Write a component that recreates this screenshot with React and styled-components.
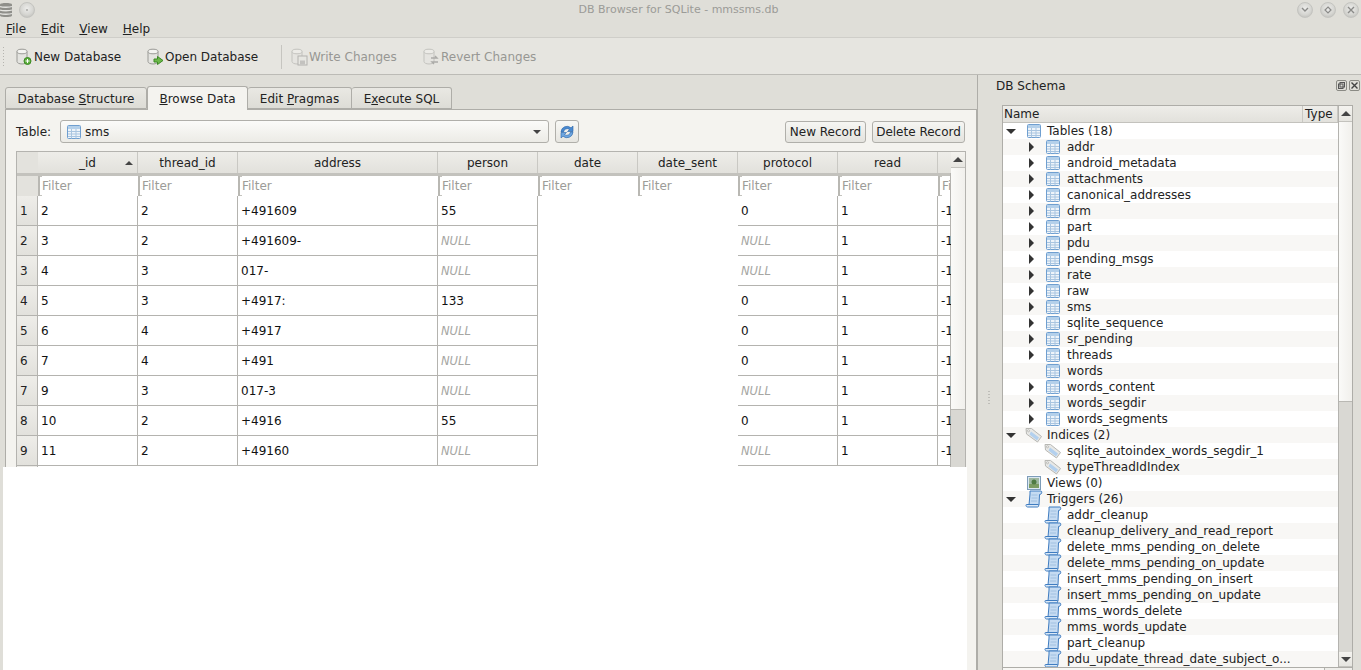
import React from "react";
import styled, { createGlobalStyle } from "styled-components";

const GlobalStyle = createGlobalStyle`
  html, body { margin: 0; padding: 0; background: #dfded8; }
  * { box-sizing: border-box; }
`;

const columns = [
  { name: "_id", width: 100, sorted: true },
  { name: "thread_id", width: 100 },
  { name: "address", width: 200 },
  { name: "person", width: 100 },
  { name: "date", width: 100, hidden: true },
  { name: "date_sent", width: 100, hidden: true },
  { name: "protocol", width: 100 },
  { name: "read", width: 100 },
  { name: "", width: 13, cut: true },
];

const rows = [
  ["2", "2", "+491609", "55", "", "", "0", "1", "-1"],
  ["3", "2", "+491609-", null, "", "", null, "1", "-1"],
  ["4", "3", "017-", null, "", "", null, "1", "-1"],
  ["5", "3", "+4917:", "133", "", "", "0", "1", "-1"],
  ["6", "4", "+4917", null, "", "", "0", "1", "-1"],
  ["7", "4", "+491", null, "", "", "0", "1", "-1"],
  ["9", "3", "017-3", null, "", "", null, "1", "-1"],
  ["10", "2", "+4916", "55", "", "", "0", "1", "-1"],
  ["11", "2", "+49160", null, "", "", null, "1", "-1"],
];

const tree = [
  { label: "Tables (18)", level: 0, icon: "table", arrow: "open" },
  ...["addr", "android_metadata", "attachments", "canonical_addresses", "drm", "part", "pdu", "pending_msgs", "rate", "raw", "sms", "sqlite_sequence", "sr_pending", "threads"].map((label) => ({ label, level: 1, icon: "table", arrow: "closed" })),
  { label: "words", level: 1, icon: "table" },
  ...["words_content", "words_segdir", "words_segments"].map((label) => ({ label, level: 1, icon: "table", arrow: "closed" })),
  { label: "Indices (2)", level: 0, icon: "tag", arrow: "open" },
  { label: "sqlite_autoindex_words_segdir_1", level: 1, icon: "tag" },
  { label: "typeThreadIdIndex", level: 1, icon: "tag" },
  { label: "Views (0)", level: 0, icon: "view" },
  { label: "Triggers (26)", level: 0, icon: "scroll", arrow: "open" },
  ...["addr_cleanup", "cleanup_delivery_and_read_report", "delete_mms_pending_on_delete", "delete_mms_pending_on_update", "insert_mms_pending_on_insert", "insert_mms_pending_on_update", "mms_words_delete", "mms_words_update", "part_cleanup", "pdu_update_thread_date_subject_o..."].map((label) => ({ label, level: 1, icon: "scroll" })),
];

const TableIcon = () => (
  <svg width="14" height="14" viewBox="0 0 14 14">
    <rect x="0.5" y="0.5" width="13" height="13" rx="1" fill="#eef4fa" stroke="#6f9fd0" />
    <rect x="1" y="1" width="12" height="3" fill="#b4d0ea" />
    <path d="M1 6.5h12M1 9h12M1 11.5h12M4.5 4v9.5M9 4v9.5" stroke="#a9c5e0" strokeWidth="1" fill="none" />
  </svg>
);

const TagIcon = () => (
  <svg width="18" height="16" viewBox="0 0 18 16">
    <path d="M1 1.5h5.5l10 8-4 5.5-11-8z" fill="#e8e8e6" stroke="#b8b8b4" />
    <path d="M6 4.5l8 6-2 3-7.5-6z" fill="#b3d0ee" />
    <circle cx="3.5" cy="3.8" r="1" fill="#fff" stroke="#9a9a96" strokeWidth="0.6" />
  </svg>
);

const ViewIcon = () => (
  <svg width="14" height="14" viewBox="0 0 14 14">
    <rect x="0.5" y="0.5" width="13" height="13" fill="#dce8f2" stroke="#7d9cb8" />
    <rect x="2" y="2" width="10" height="6" fill="#9fb8a0" />
    <rect x="2" y="8" width="10" height="4" fill="#7c9c62" />
    <circle cx="7" cy="6" r="2.5" fill="#4f7a42" />
  </svg>
);

const ScrollIcon = () => (
  <svg width="18" height="18" viewBox="0 0 18 18">
    <path d="M5 1h11c1 0 1 2.5 0 3l-1.5.5L14 15H4l1-11z" fill="#c5dbf2" stroke="#3f7cc0" />
    <path d="M1.5 14.5H13c1 0 1 2.5-.5 2.5H2.5c-1.5 0-2-2.5-1-2.5z" fill="#dbe9f7" stroke="#3f7cc0" />
    <path d="M6.5 5h6M6.5 8h6M6 11h6" stroke="#a0c0e0" fill="none" />
  </svg>
);

const DbIcon = ({ dim, children }) => (
  <svg width="18" height="18" viewBox="0 0 18 18" opacity={dim ? 0.45 : 1}>
    <path d="M2 3.5v10c0 1.4 2.2 2.5 5 2.5s5-1.1 5-2.5v-10z" fill="#e4e4e0" stroke="#9a9a96" />
    <ellipse cx="7" cy="3.5" rx="5" ry="2.3" fill="#f4f4f1" stroke="#9a9a96" />
    {children}
  </svg>
);

const treeIcons = { table: TableIcon, tag: TagIcon, view: ViewIcon, scroll: ScrollIcon };

const Screen = styled.div`
  position: relative;
  width: 1361px;
  height: 670px;
  overflow: hidden;
  display: flex;
  flex-direction: column;
  background: #dfded8;
  color: #222;
  font-family: "DejaVu Sans", sans-serif;
  font-size: 12px;
`;

const TitleBar = styled.div`
  position: relative;
  height: 19px;
  flex: none;
  display: flex;
  align-items: center;
  padding-right: 2px;
`;

const TitleText = styled.div`
  position: absolute;
  left: 0;
  right: 4px;
  text-align: center;
  color: #9b9b97;
  font-size: 11px;
`;

const TitleSpacer = styled.div`
  flex: 1;
`;

const WinButton = styled.div`
  width: 16px;
  height: 16px;
  border-radius: 50%;
  background: radial-gradient(circle at 50% 40%, #ececea 0%, #d6d6d2 55%, #b6b6b2 100%);
  border: 1px solid #c4c4c0;
  display: flex;
  align-items: center;
  justify-content: center;
  margin-left: ${(p) => p.$gap || 7}px;
`;

const MenuBar = styled.div`
  height: 19px;
  flex: none;
  display: flex;
  align-items: center;
  gap: 15px;
  padding: 1px 0 0 6px;
  font-size: 12px;
  border-bottom: 1px solid #cfcec9;
`;

const Mnemonic = styled.span`
  text-decoration: underline;
`;

const ToolBar = styled.div`
  height: 37px;
  flex: none;
  display: flex;
  align-items: center;
  background: #e6e5e0;
  border-bottom: 1px solid #bcbbb6;
  padding: 1px 0 0 2px;
`;

const Grip = styled.div`
  width: 3px;
  height: 22px;
  margin-right: 10px;
  background-image: radial-gradient(#b5b4af 0.7px, transparent 0.8px);
  background-size: 3px 3px;
`;

const ToolButton = styled.div`
  display: flex;
  align-items: center;
  gap: 1px;
  width: ${(p) => p.$width}px;
  color: ${(p) => (p.$disabled ? "#979793" : "#222")};
  font-size: 12px;
`;

const ToolSep = styled.div`
  width: 1px;
  height: 24px;
  background: #c6c5c0;
  margin-right: 8px;
`;

const Main = styled.div`
  flex: 1;
  min-height: 0;
  display: flex;
`;

const LeftArea = styled.div`
  width: 977px;
  flex: none;
  display: flex;
  flex-direction: column;
  padding: 9px 0 0 5px;
`;

const TabRow = styled.div`
  height: 25px;
  flex: none;
  display: flex;
  align-items: flex-end;
  position: relative;
  z-index: 1;
`;

const Tab = styled.div`
  width: ${(p) => p.$width}px;
  height: ${(p) => (p.$active ? 24 : 22)}px;
  margin-bottom: ${(p) => (p.$active ? -1 : 0)}px;
  padding-top: ${(p) => (p.$active ? 0 : 1)}px;
  display: flex;
  align-items: center;
  justify-content: center;
  background: ${(p) => (p.$active ? "#f4f3ef" : "linear-gradient(#e9e8e3, #dddcd6)")};
  border: 1px solid #aeada8;
  border-bottom: ${(p) => (p.$active ? "none" : "1px solid #aeada8")};
  border-left: ${(p) => (p.$first || p.$active ? "1px solid #aeada8" : "none")};
  border-radius: 3px 3px 0 0;
  font-size: 12px;
`;

const Pane = styled.div`
  flex: 1;
  min-height: 0;
  background: #f4f3ef;
  border: 1px solid #aeada8;
  border-bottom: none;
  padding: 10px 10px 0 10px;
  display: flex;
  flex-direction: column;
`;

const TableBar = styled.div`
  height: 23px;
  flex: none;
  display: flex;
  align-items: center;
  margin-bottom: 8px;
`;

const BarLabel = styled.span`
  width: 44px;
  font-size: 12px;
`;

const Combo = styled.div`
  width: 489px;
  height: 23px;
  display: flex;
  align-items: center;
  gap: 4px;
  padding: 0 7px 0 6px;
  border: 1px solid #b0afaa;
  border-radius: 3px;
  background: linear-gradient(#fbfbf9, #ecebe6);
  font-size: 12px;
`;

const ComboText = styled.span`
  flex: 1;
`;

const Caret = styled.div`
  width: 0;
  height: 0;
  border-left: ${(p) => p.$size || 4}px solid transparent;
  border-right: ${(p) => p.$size || 4}px solid transparent;
  border-top: ${(p) => p.$size || 4}px solid #444;
`;

const RefreshButton = styled.div`
  width: 24px;
  height: 23px;
  margin: 0 206px 0 6px;
  display: flex;
  align-items: center;
  justify-content: center;
  border: 1px solid #b0afaa;
  border-radius: 3px;
  background: linear-gradient(#f8f8f5, #e6e5e0);
`;

const PushButton = styled.div`
  height: 22px;
  width: ${(p) => p.$width}px;
  margin-right: ${(p) => p.$gap || 0}px;
  display: flex;
  align-items: center;
  justify-content: center;
  border: 1px solid #b0afaa;
  border-radius: 3px;
  background: linear-gradient(#f6f6f3, #e4e3de);
  font-size: 12px;
  white-space: nowrap;
`;

const GridBox = styled.div`
  width: 950px;
  height: 316px;
  flex: none;
  display: flex;
  border-top: 1px solid #b4b3af;
  border-left: 1px solid #b4b3af;
  border-right: 1px solid #b4b3af;
  background: #fff;
  overflow: hidden;
`;

const GridBody = styled.div`
  flex: 1;
  min-width: 0;
`;

const HeaderRow = styled.div`
  display: flex;
  height: 24px;
  border-bottom: 3px solid #c3c2bd;
`;

const Corner = styled.div`
  width: 21px;
  flex: none;
  background: #e3e2dd;
`;

const HeaderCell = styled.div`
  position: relative;
  width: ${(p) => p.$width}px;
  flex: none;
  display: flex;
  align-items: center;
  justify-content: center;
  background: linear-gradient(#eeede9, #e2e1dc);
  border-right: ${(p) => (p.$cut ? "none" : "1px solid #c9c8c3")};
  font-size: 12px;
`;

const SortMark = styled.div`
  position: absolute;
  right: 4px;
  top: 9px;
  border-left: 4px solid transparent;
  border-right: 4px solid transparent;
  border-bottom: 4px solid #444;
`;

const FilterRow = styled.div`
  display: flex;
  height: 20px;
  background: #fff;
`;

const FilterCell = styled.div`
  width: ${(p) => p.$width}px;
  flex: none;
  overflow: hidden;
  border-left: 2px solid #b9b8b3;
  padding-left: 2px;
  color: #9c9c98;
  font-size: 12px;
  line-height: 21px;
  white-space: nowrap;
  background:
    linear-gradient(#c4c3be, #c4c3be) 0 0 / 2px 1px no-repeat,
    linear-gradient(#c4c3be, #c4c3be) 0 100% / 2px 1px no-repeat;
`;

const DataRow = styled.div`
  display: flex;
  height: 30px;
`;

const RowHead = styled.div`
  width: 21px;
  flex: none;
  display: flex;
  align-items: center;
  padding-left: 3px;
  background: linear-gradient(#eeede9, #e2e1dc);
  border-bottom: 1px solid #b4b3af;
  border-right: 1px solid #b4b3af;
  font-size: 12px;
`;

const Cell = styled.div`
  position: relative;
  width: ${(p) => p.$width}px;
  flex: none;
  display: flex;
  align-items: center;
  padding-left: 3px;
  overflow: hidden;
  white-space: nowrap;
  border-right: ${(p) => (p.$blank || p.$cut ? "none" : "1px solid #b4b3af")};
  border-bottom: ${(p) => (p.$blank ? "none" : "1px solid #b4b3af")};
  font-size: 12px;
  color: #111;
`;

const NullText = styled.span`
  font-style: italic;
  color: #a6a6a2;
  font-size: 11.5px;
`;

const LineGap = styled.div`
  position: absolute;
  left: 27px;
  bottom: -1px;
  width: 93px;
  height: 2px;
  background: #fff;
`;

const VScroll = styled.div`
  width: ${(p) => p.$width}px;
  flex: none;
  display: flex;
  flex-direction: column;
  border-left: 1px solid #b4b3af;
  background-color: #d9d8d3;
  background-image: radial-gradient(#c9c8c3 0.6px, transparent 0.7px);
  background-size: 2px 2px;
`;

const ScrollArrow = styled.div`
  height: ${(p) => p.$height || 16}px;
  flex: none;
  display: flex;
  align-items: center;
  justify-content: center;
  background: linear-gradient(#f4f3ef, #e6e5e0);
  border-bottom: 1px solid #c3c2bd;
`;

const UpCaret = styled.div`
  border-left: 5px solid transparent;
  border-right: 5px solid transparent;
  border-bottom: 5px solid #444;
`;

const ScrollThumb = styled.div`
  height: ${(p) => p.$height}px;
  flex: none;
  background: linear-gradient(90deg, #fafaf8, #f1f0ec);
  border-bottom: 1px solid #b9b8b3;
`;

const ScrollFill = styled.div`
  flex: 1;
`;

const Splitter = styled.div`
  width: 25px;
  flex: none;
  display: flex;
  align-items: center;
  justify-content: center;
  padding: 50px 2px 0 0;
  border-left: 1px solid #aeada8;
`;

const SplitGrip = styled.div`
  width: 2px;
  height: 16px;
  background-image: radial-gradient(#bebdb8 0.7px, transparent 0.8px);
  background-size: 2px 3px;
`;

const Dock = styled.div`
  flex: 1;
  min-width: 0;
  display: flex;
  flex-direction: column;
`;

const DockTitle = styled.div`
  height: 30px;
  flex: none;
  display: flex;
  align-items: center;
  padding: 0 1px 9px 0;
  margin-left: -6px;
  font-size: 12px;
`;

const DockLabel = styled.span`
  flex: 1;
`;

const DockButton = styled.div`
  width: 11px;
  height: 11px;
  margin-left: 2px;
  border: 1px solid #8a8a84;
  border-radius: 2px;
  display: flex;
  align-items: center;
  justify-content: center;
`;

const TreeBox = styled.div`
  width: 351px;
  flex: 1;
  min-height: 0;
  display: flex;
  flex-direction: column;
  background: #fff;
  border-top: 1px solid #aeada8;
  border-left: 1px solid #aeada8;
  border-right: 1px solid #aeada8;
  overflow: hidden;
`;

const TreeContent = styled.div`
  height: 561px;
  flex: none;
  display: flex;
`;

const TreeMain = styled.div`
  flex: 1;
  min-width: 0;
  overflow: hidden;
`;

const TreeHeader = styled.div`
  display: flex;
  height: 17px;
  background: linear-gradient(#eeede9, #e2e1dc);
  border-bottom: 1px solid #c3c2bd;
  font-size: 12px;
  line-height: 17px;
`;

const TreeHeadCell = styled.div`
  width: ${(p) => p.$width}px;
  padding-left: ${(p) => p.$pad}px;
  border-right: 1px solid #c9c8c3;
`;

const TreeRow = styled.div`
  display: flex;
  align-items: center;
  height: 16px;
  background: ${(p) => (p.$odd ? "#f8f7f5" : "#fff")};
  font-size: 12px;
  white-space: nowrap;
`;

const ArrowSlot = styled.div`
  width: ${(p) => (p.$level ? 43 : 24)}px;
  flex: none;
  display: flex;
  justify-content: flex-end;
  padding-right: ${(p) => (p.$level ? 12 : 11)}px;
`;

const ClosedArrow = styled.div`
  border-top: 5px solid transparent;
  border-bottom: 5px solid transparent;
  border-left: 5px solid #333;
`;

const OpenArrow = styled.div`
  border-left: 5px solid transparent;
  border-right: 5px solid transparent;
  border-top: 5px solid #333;
`;

const IconSlot = styled.div`
  width: ${(p) => (p.$level ? 21 : 20)}px;
  flex: none;
  display: flex;
  align-items: center;
  margin-left: ${(p) => p.$shift}px;
  margin-right: ${(p) => -p.$shift}px;
`;

const HBar = styled.div`
  flex: 1;
  display: flex;
  border-top: 1px solid #aeada8;
  background: #eeede9;
`;

const HBarThumb = styled.div`
  width: 322px;
  border-right: 1px solid #b4b3af;
  background: #f8f7f4;
`;

const WhitePatch = styled.div`
  position: absolute;
  left: 3px;
  top: 467px;
  width: 964px;
  height: 203px;
  background: #fff;
`;

function Grid() {
  return (
    <GridBox>
      <GridBody>
        <HeaderRow>
          <Corner />
          {columns.map((c, i) => (
            <HeaderCell key={i} $width={c.width} $cut={c.cut}>
              {c.name}
              {c.sorted && <SortMark />}
            </HeaderCell>
          ))}
        </HeaderRow>
        <FilterRow>
          <Corner />
          {columns.map((c, i) => (
            <FilterCell key={i} $width={c.width}>Filter</FilterCell>
          ))}
        </FilterRow>
        {rows.map((row, r) => (
          <DataRow key={r}>
            <RowHead>{r + 1}</RowHead>
            {row.map((v, i) => (
              <Cell key={i} $width={columns[i].width} $blank={columns[i].hidden} $cut={columns[i].cut}>
                {v === null ? <NullText>NULL</NullText> : v}
                {r === 1 && i === 2 && <LineGap />}
              </Cell>
            ))}
          </DataRow>
        ))}
        <DataRow>
          <RowHead />
        </DataRow>
      </GridBody>
      <VScroll $width={15}>
        <ScrollArrow><UpCaret /></ScrollArrow>
        <ScrollThumb $height={242} />
        <ScrollFill />
      </VScroll>
    </GridBox>
  );
}

function SchemaTree() {
  return (
    <TreeBox>
      <TreeContent>
        <TreeMain>
          <TreeHeader>
            <TreeHeadCell $width={301} $pad={1}>Name</TreeHeadCell>
            <TreeHeadCell $width={35} $pad={2}>Type</TreeHeadCell>
          </TreeHeader>
          {tree.map((item, i) => {
            const Icon = treeIcons[item.icon];
            const shift = item.icon === "tag" || item.icon === "scroll" ? -2 : 0;
            return (
              <TreeRow key={i} $odd={i % 2 === 1}>
                <ArrowSlot $level={item.level}>
                  {item.arrow === "open" && <OpenArrow />}
                  {item.arrow === "closed" && <ClosedArrow />}
                </ArrowSlot>
                <IconSlot $level={item.level} $shift={shift}><Icon /></IconSlot>
                {item.label}
              </TreeRow>
            );
          })}
        </TreeMain>
        <VScroll $width={14}>
          <ScrollArrow><UpCaret /></ScrollArrow>
          <ScrollThumb $height={280} />
          <ScrollFill />
          <ScrollArrow $height={15}><Caret $size={5} /></ScrollArrow>
        </VScroll>
      </TreeContent>
      <HBar><HBarThumb /></HBar>
    </TreeBox>
  );
}

export default function App() {
  return (
    <>
      <GlobalStyle />
      <Screen>
        <TitleBar>
          <svg width="13" height="18" viewBox="0 0 13 18">
            <path d="M0 3.5C0 2.5 3 2 6 2s6 .5 6 1.5v11c0 1-3 1.5-6 1.5s-6-.5-6-1.5z" fill="#8f8f8a" />
            <path d="M0 5.5c2 1 10 1 12 0M0 9c2 1 10 1 12 0M0 12.5c2 1 10 1 12 0" stroke="#e4e4e0" strokeWidth="1.3" fill="none" />
          </svg>
          <WinButton $gap={6}>
            <svg width="4" height="4" viewBox="0 0 4 4"><circle cx="2" cy="2" r="1" fill="#a8a8a4" /></svg>
          </WinButton>
          <TitleText>DB Browser for SQLite - mmssms.db</TitleText>
          <TitleSpacer />
          <WinButton>
            <svg width="8" height="6" viewBox="0 0 8 6"><path d="M1 1l3 3 3-3" stroke="#8a8a88" strokeWidth="1.4" fill="none" /></svg>
          </WinButton>
          <WinButton>
            <svg width="8" height="8" viewBox="0 0 8 8"><path d="M4 1l3 3-3 3-3-3z" stroke="#8a8a88" strokeWidth="1.2" fill="none" /></svg>
          </WinButton>
          <WinButton>
            <svg width="8" height="8" viewBox="0 0 8 8"><path d="M1 1l6 6M7 1l-6 6" stroke="#8a8a88" strokeWidth="1.4" fill="none" /></svg>
          </WinButton>
        </TitleBar>
        <MenuBar>
          <span><Mnemonic>F</Mnemonic>ile</span>
          <span><Mnemonic>E</Mnemonic>dit</span>
          <span><Mnemonic>V</Mnemonic>iew</span>
          <span><Mnemonic>H</Mnemonic>elp</span>
        </MenuBar>
        <ToolBar>
          <Grip />
          <ToolButton $width={131}>
            <DbIcon>
              <circle cx="12.5" cy="13" r="3.5" fill="#5cae3c" stroke="#3c8a24" />
              <path d="M10.5 13h4M12.5 11v4" stroke="#fff" />
            </DbIcon>
            New Database
          </ToolButton>
          <ToolButton $width={135}>
            <DbIcon>
              <path d="M8 11h3.5V8.5L17 12.5l-5.5 4V14H8z" fill="#6cb84a" stroke="#3c8a24" />
            </DbIcon>
            Open Database
          </ToolButton>
          <ToolSep />
          <ToolButton $width={132} $disabled>
            <DbIcon dim>
              <rect x="8" y="8" width="9" height="9" fill="#e8e8e4" stroke="#777" />
              <rect x="10" y="12.5" width="5" height="4" fill="#999" />
            </DbIcon>
            Write Changes
          </ToolButton>
          <ToolButton $width={120} $disabled>
            <DbIcon dim>
              <path d="M9 10h6l-2-2M16 14h-6l2 2" stroke="#666" strokeWidth="1.4" fill="none" />
            </DbIcon>
            Revert Changes
          </ToolButton>
        </ToolBar>
        <Main>
          <LeftArea>
            <TabRow>
              <Tab $width={142} $first>
                <span>Database <Mnemonic>S</Mnemonic>tructure</span>
              </Tab>
              <Tab $width={101} $active>
                <span><Mnemonic>B</Mnemonic>rowse Data</span>
              </Tab>
              <Tab $width={104}>
                <span>Edit <Mnemonic>P</Mnemonic>ragmas</span>
              </Tab>
              <Tab $width={100}>
                <span>E<Mnemonic>x</Mnemonic>ecute SQL</span>
              </Tab>
            </TabRow>
            <Pane>
              <TableBar>
                <BarLabel>Table:</BarLabel>
                <Combo>
                  <TableIcon />
                  <ComboText>sms</ComboText>
                  <Caret />
                </Combo>
                <RefreshButton>
                  <svg width="18" height="18" viewBox="0 0 18 18">
                    <path d="M3 9a6 6 0 0 1 10-4.2L15 3v5.5H9.5l2-2A3.7 3.7 0 0 0 5.5 9z" fill="#4a8ad0" stroke="#2c64a8" strokeWidth="0.6" />
                    <path d="M15 9a6 6 0 0 1-10 4.2L3 15V9.5h5.5l-2 2A3.7 3.7 0 0 0 12.5 9z" fill="#6ea6e0" stroke="#2c64a8" strokeWidth="0.6" />
                  </svg>
                </RefreshButton>
                <PushButton $width={81} $gap={6}>New Record</PushButton>
                <PushButton $width={93}>Delete Record</PushButton>
              </TableBar>
              <Grid />
            </Pane>
          </LeftArea>
          <Splitter><SplitGrip /></Splitter>
          <Dock>
            <DockTitle>
              <DockLabel>DB Schema</DockLabel>
              <DockButton>
                <svg width="7" height="7" viewBox="0 0 7 7"><rect x="2" y="0.5" width="4.5" height="4.5" fill="none" stroke="#555" /><rect x="0.5" y="2" width="4.5" height="4.5" fill="none" stroke="#555" /></svg>
              </DockButton>
              <DockButton>
                <svg width="7" height="7" viewBox="0 0 7 7"><path d="M0.5 0.5l6 6M6.5 0.5l-6 6" stroke="#444" strokeWidth="1.4" /></svg>
              </DockButton>
            </DockTitle>
            <SchemaTree />
          </Dock>
        </Main>
        <WhitePatch />
      </Screen>
    </>
  );
}
